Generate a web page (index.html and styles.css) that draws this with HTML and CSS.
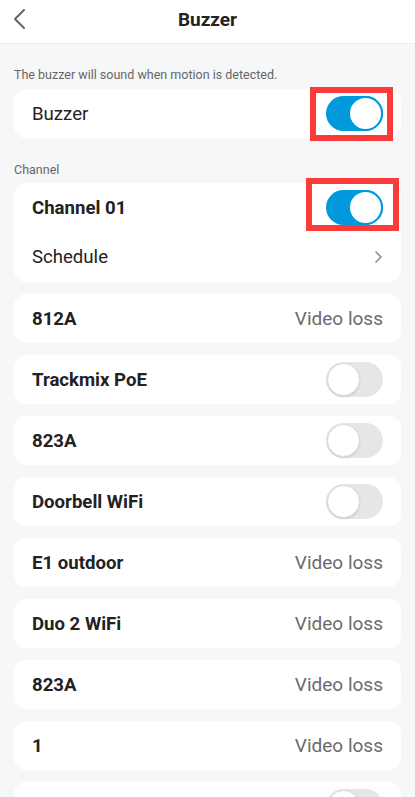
FILE: index.html
```html
<!DOCTYPE html>
<html>
<head>
<meta charset="utf-8">
<link rel="stylesheet" href="styles.css">
</head>
<body>
<div class="app">
  <header class="topbar">
    <svg class="back" width="14" height="22" viewBox="0 0 14 22"><polyline points="11,2 2,11 11,20" fill="none" stroke="#666" stroke-width="2" stroke-linecap="round" stroke-linejoin="round"/></svg>
    <h1 class="title">Buzzer</h1>
  </header>
  <main class="content">
    <p class="section-label first">The buzzer will sound when motion is detected.</p>
    <div class="card">
      <div class="row">
        <span class="label">Buzzer</span>
        <span class="toggle on"><span class="knob"></span><span class="mark mark-a"></span></span>
      </div>
    </div>
    <p class="section-label second">Channel</p>
    <div class="card">
      <div class="row half">
        <span class="label bold">Channel 01</span>
        <span class="toggle on"><span class="knob"></span><span class="mark mark-b"></span></span>
      </div>
      <div class="row half">
        <span class="label">Schedule</span>
        <svg class="chev" width="10" height="14" viewBox="0 0 10 14"><polyline points="3,2 8,7 3,12" fill="none" stroke="#8c8c9c" stroke-width="1.6" stroke-linecap="round" stroke-linejoin="round"/></svg>
      </div>
    </div>
    <div class="list">
      <div class="card"><div class="row"><span class="label bold">812A</span><span class="status">Video loss</span></div></div>
      <div class="card"><div class="row"><span class="label bold">Trackmix PoE</span><span class="toggle"><span class="knob"></span></span></div></div>
      <div class="card"><div class="row"><span class="label bold">823A</span><span class="toggle"><span class="knob"></span></span></div></div>
      <div class="card"><div class="row"><span class="label bold">Doorbell WiFi</span><span class="toggle"><span class="knob"></span></span></div></div>
      <div class="card"><div class="row"><span class="label bold">E1 outdoor</span><span class="status">Video loss</span></div></div>
      <div class="card"><div class="row"><span class="label bold">Duo 2 WiFi</span><span class="status">Video loss</span></div></div>
      <div class="card"><div class="row"><span class="label bold">823A</span><span class="status">Video loss</span></div></div>
      <div class="card"><div class="row"><span class="label bold">1</span><span class="status">Video loss</span></div></div>
      <div class="card"><div class="row"><span class="label bold">&nbsp;</span><span class="toggle"><span class="knob"></span></span></div></div>
    </div>
  </main>
</div>
</body>
</html>
```
FILE: styles.css
```css
* { box-sizing: border-box; }
html, body { margin: 0; padding: 0; }
body {
  background: #f6f7f9;
  font-family: Roboto, "Noto Sans", "Liberation Sans", sans-serif;
  color: #333;
  overflow: hidden;
  height: 797px;
}
.app { display: flex; flex-direction: column; }
.topbar {
  height: 44px;
  background: #fff;
  border-bottom: 1px solid #ececee;
  display: flex;
  align-items: center;
  justify-content: center;
  position: relative;
}
.back { position: absolute; left: 13px; top: 8px; }
.title {
  margin: 0;
  font-size: 19px;
  font-weight: 700;
  color: #222;
  line-height: 22px;
  margin-top: -3px;
}
.content {
  display: flex;
  flex-direction: column;
  padding: 0 14px;
}
.section-label {
  margin: 0;
  font-size: 12.5px;
  line-height: 16px;
  color: #666;
}
.section-label.first { padding-top: 23px; margin-bottom: 6px; }
.section-label.second { padding-top: 24px; margin-bottom: 5px; }
.card {
  background: #fff;
  border-radius: 12px;
}
.row {
  height: 49px;
  padding: 0 18px 0 18px;
  display: flex;
  align-items: center;
  justify-content: space-between;
}
.row.half { height: 49.5px; }
.label {
  font-size: 18.6px;
  color: #222;
  line-height: 22px;
}
.label.bold { font-weight: 700; }
.status {
  font-size: 19px;
  color: #6b6b6b;
}
.chev { margin-right: 0; }
.list {
  display: flex;
  flex-direction: column;
  gap: 12px;
  margin-top: 12px;
}
.toggle {
  position: relative;
  width: 57px;
  height: 35px;
  border-radius: 18px;
  background: #e6e6e8;
  display: block;
}
.toggle .knob {
  position: absolute;
  top: 1px;
  left: 1px;
  width: 33px;
  height: 33px;
  border-radius: 50%;
  background: #fff;
  border: 1px solid #dcdcdc;
  box-shadow: 0 1px 2px rgba(0,0,0,0.12);
}
.toggle.on { background: #0099dc; }
.toggle.on .knob {
  left: auto;
  right: 0;
  top: 0;
  width: 35px;
  height: 35px;
  border: 2px solid #0099dc;
  box-shadow: none;
}
.mark {
  position: absolute;
  border: 6px solid #fb3a3a;
}
.mark-a { left: -16px; right: -10px; top: -9px; bottom: -10px; }
.mark-b { left: -20px; right: -16px; top: -12px; bottom: -6px; }
```
